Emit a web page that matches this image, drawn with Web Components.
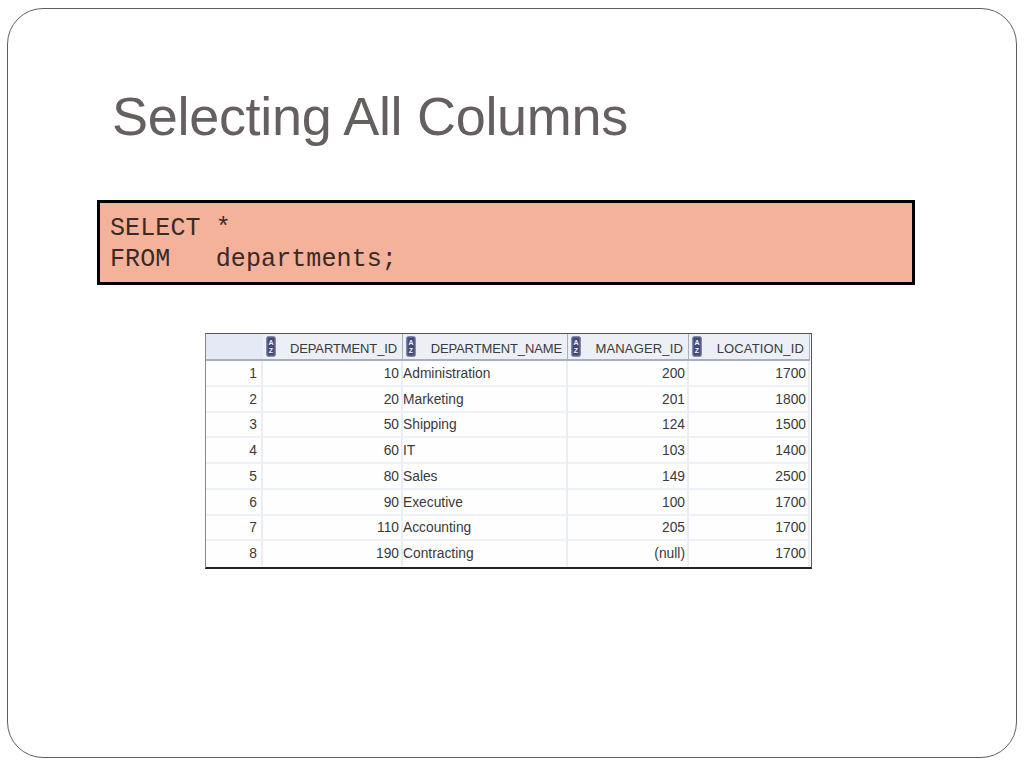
<!DOCTYPE html>
<html>
<head>
<meta charset="utf-8">
<title>Selecting All Columns</title>
<style>
  html, body { margin: 0; padding: 0; background: #fff; }
</style>
</head>
<body>
<slide-frame>
  <span slot="title">Selecting All Columns</span>
  <code-box>SELECT *
FROM   departments;</code-box>
  <data-table></data-table>
</slide-frame>

<script>
class SlideFrame extends HTMLElement {
  constructor() {
    super();
    this.attachShadow({ mode: 'open' });
  }

  connectedCallback() {
    this.shadowRoot.innerHTML = `
      <style>
        :host {
          display: block;
          box-sizing: border-box;
          width: 1010px;
          height: 750px;
          margin: 8px 0 0 7px;
          border: 1px solid #5f5f5f;
          border-radius: 36px;
          padding: 0 0 0 89px;
        }
        h1 {
          margin: 0;
          padding: 75px 0 0 15px;
          height: 116px;
          font: 400 54px/64px "Liberation Sans", sans-serif;
          letter-spacing: -0.3px;
          color: #655f5f;
        }
      </style>
      <h1><slot name="title"></slot></h1>
      <slot></slot>
    `;
  }
}

class CodeBox extends HTMLElement {
  constructor() {
    super();
    this.attachShadow({ mode: 'open' });
  }

  connectedCallback() {
    this.shadowRoot.innerHTML = `
      <style>
        :host {
          display: block;
          box-sizing: border-box;
          width: 818px;
          height: 85px;
          padding: 10px 10px 0 10px;
          background: #f4b29b;
          border: 3px solid #000;
          font: 25px/31px "Liberation Mono", monospace;
          letter-spacing: 0.1px;
          color: #3a2a25;
        }
        pre { margin: 0; font: inherit; }
      </style>
      <pre><slot></slot></pre>
    `;
  }
}

class SortIcon extends HTMLElement {
  constructor() {
    super();
    this.attachShadow({ mode: 'open' });
  }

  connectedCallback() {
    this.shadowRoot.innerHTML = `
      <style>
        :host { display: block; width: 10px; height: 21px; }
        svg { display: block; }
        text { font: 700 7px "Liberation Sans", sans-serif; fill: #eef0f6; text-anchor: middle; }
      </style>
      <svg width="10" height="21" viewBox="0 0 10 21">
        <rect x="0.5" y="0.5" width="9" height="20" rx="2" fill="#5b5f8c" stroke="#858aa8"/>
        <rect x="2" y="2" width="6" height="17" fill="#454a78"/>
        <text x="5" y="9">A</text>
        <text x="5" y="17">Z</text>
      </svg>
    `;
  }
}

class DataTable extends HTMLElement {
  constructor() {
    super();
    this.attachShadow({ mode: 'open' });
  }

  connectedCallback() {
    const headers = ['DEPARTMENT_ID', 'DEPARTMENT_NAME', 'MANAGER_ID', 'LOCATION_ID'];
    const rows = [
      [10, 'Administration', 200, 1700],
      [20, 'Marketing', 201, 1800],
      [50, 'Shipping', 124, 1500],
      [60, 'IT', 103, 1400],
      [80, 'Sales', 149, 2500],
      [90, 'Executive', 100, 1700],
      [110, 'Accounting', 205, 1700],
      [190, 'Contracting', '(null)', 1700]
    ];

    this.shadowRoot.innerHTML = `
      <style>
        :host {
          display: block;
          box-sizing: border-box;
          width: 607px;
          height: 236px;
          margin: 48px 0 0 108px;
          background: #fefefe;
          border-top: 1px solid #555;
          border-left: 1px solid #888;
          border-right: 1px solid #555;
          border-bottom: 2px solid #222;
          font: 13.8px "Liberation Sans", sans-serif;
          color: #3a3a3a;
        }
        .grid {
          display: grid;
          grid-template-columns: 57px 140px 165px 121px 121px 1px;
          grid-template-rows: 27px repeat(8, 25.75px);
          height: 100%;
        }
        .h {
          display: flex;
          align-items: center;
          gap: 6px;
          padding: 0 5px 0 3px;
          background: #ecEff5;
          border-bottom: 2px solid #a9afb9;
          border-right: 1px solid #aab0bc;
          box-sizing: border-box;
          font-size: 13px;
          white-space: nowrap;
        }
        .h span { flex: 1; text-align: right; padding-top: 3px; letter-spacing: -0.12px; }
        .h.wide span { letter-spacing: 0.15px; }
        .h.corner { background: #e3e9f5; border-right: none; padding: 0; }
        .c {
          box-sizing: border-box;
          display: flex;
          align-items: center;
          justify-content: flex-end;
          padding: 1px 2px 0 0;
          border-bottom: 2px solid #eef1f8;
          border-right: 2px solid #e9edf6;
          white-space: nowrap;
        }
        .c.idx { padding-right: 4px; }
        .c.txt { justify-content: flex-start; padding-right: 0; }
        .c.last { border-bottom-color: transparent; }
      </style>
      <div class="grid">
        <div class="h corner"></div>
        ${headers.map((h, i) => `<div class="h${i > 1 ? ' wide' : ''}"><sort-icon></sort-icon><span>${h}</span></div>`).join('')}
        <div></div>
        ${rows.map((r, i) => {
          const last = i === rows.length - 1 ? ' last' : '';
          return `
            <div class="c idx${last}">${i + 1}</div>
            <div class="c${last}">${r[0]}</div>
            <div class="c txt${last}">${r[1]}</div>
            <div class="c${last}">${r[2]}</div>
            <div class="c${last}">${r[3]}</div>
            <div></div>
          `;
        }).join('')}
      </div>
    `;
  }
}

customElements.define('slide-frame', SlideFrame);
customElements.define('code-box', CodeBox);
customElements.define('sort-icon', SortIcon);
customElements.define('data-table', DataTable);
</script>
</body>
</html>
